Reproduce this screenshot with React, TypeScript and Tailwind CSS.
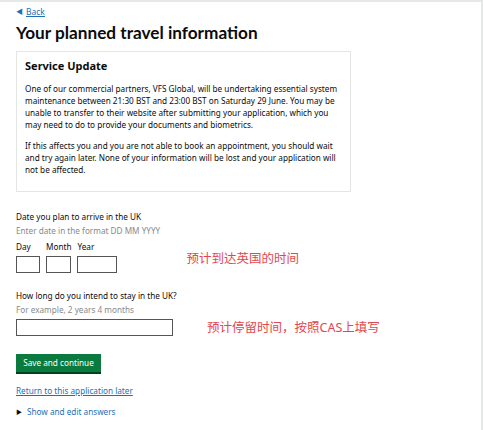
import React from "react";

export default function App() {
  const body = "text-[8.2px] leading-[12px] whitespace-nowrap";
  return (
    <div
      className="w-[483px] h-[430px] bg-white border-t-2 border-r-2 border-[#e6e8e8] overflow-hidden text-[#0b0c0c]"
      style={{ fontFamily: '"Noto Sans", "Noto Sans CJK SC", sans-serif' }}
    >
      <div className="pl-4 pr-4">
        <div className="pt-[4px] flex items-center text-[8.5px] leading-[12px] text-[#1d70b8]">
          <span className="text-[7px] mr-[3px]">◀</span>
          <span className="underline">Back</span>
        </div>
        <h1
          className="mt-[5px] text-[17.2px] leading-[20px] font-bold whitespace-nowrap"
          style={{ fontFamily: 'Lato, "Noto Sans", sans-serif' }}
        >
          Your planned travel information
        </h1>
        <div className="mt-[8px] w-[335px] h-[141px] border border-[#e4e6e6] px-[8px] pt-[7px]">
          <h2 className="text-[11px] leading-[14px] font-bold">Service Update</h2>
          <p className={`mt-[10px] ${body}`}>
            One of our commercial partners, VFS Global, will be undertaking essential system
            <br />
            maintenance between 21:30 BST and 23:00 BST on Saturday 29 June. You may be
            <br />
            unable to transfer to their website after submitting your application, which you
            <br />
            may need to do to provide your documents and biometrics.
          </p>
          <p className={`mt-[9px] ${body}`}>
            If this affects you and you are not able to book an appointment, you should wait
            <br />
            and try again later. None of your information will be lost and your application will
            <br />
            not be affected.
          </p>
        </div>

        <div className={`mt-[19px] ${body}`}>Date you plan to arrive in the UK</div>
        <div className={`mt-[2px] ${body} text-[#858b8d]`}>Enter date in the format DD MM YYYY</div>
        <div className="flex items-start">
          <div className="flex gap-[6px] mt-[4px]">
            <div className="flex flex-col">
              <span className={body}>Day</span>
              <div className="mt-[3px] w-[24px] h-[17px] border border-[#555]" />
            </div>
            <div className="flex flex-col">
              <span className={body}>Month</span>
              <div className="mt-[3px] w-[25px] h-[17px] border border-[#555]" />
            </div>
            <div className="flex flex-col">
              <span className={body}>Year</span>
              <div className="mt-[3px] w-[40px] h-[17px] border border-[#555]" />
            </div>
          </div>
          <div className="ml-[69px] mt-[14px] text-[12.5px] leading-[16px] text-[#e2474d] whitespace-nowrap">
            预计到达英国的时间
          </div>
        </div>

        <div className={`mt-[17px] ${body}`}>How long do you intend to stay in the UK?</div>
        <div className={`mt-[2px] ${body} text-[#858b8d]`}>For example, 2 years 4 months</div>
        <div className="flex items-center mt-[3px]">
          <div className="w-[157px] h-[17px] border border-[#555]" />
          <div className="ml-[34px] text-[12.5px] leading-[16px] text-[#e2474d] whitespace-nowrap">
            预计停留时间，按照CAS上填写
          </div>
        </div>

        <button className="mt-[18px] w-[85px] h-[20px] bg-[#0b7a3e] text-white text-[8.2px] leading-[12px] border-b-2 border-[#00401e] whitespace-nowrap">
          Save and continue
        </button>

        <div className="mt-[11px] text-[8.2px] leading-[12px] text-[#1d70b8] underline">
          Return to this application later
        </div>
        <div className="mt-[9px] flex items-center text-[8.2px] leading-[12px] text-[#1d70b8]">
          <span className="text-[6px] mr-[5px] text-[#0b0c0c]">▶</span>
          <span>Show and edit answers</span>
        </div>
      </div>
    </div>
  );
}
